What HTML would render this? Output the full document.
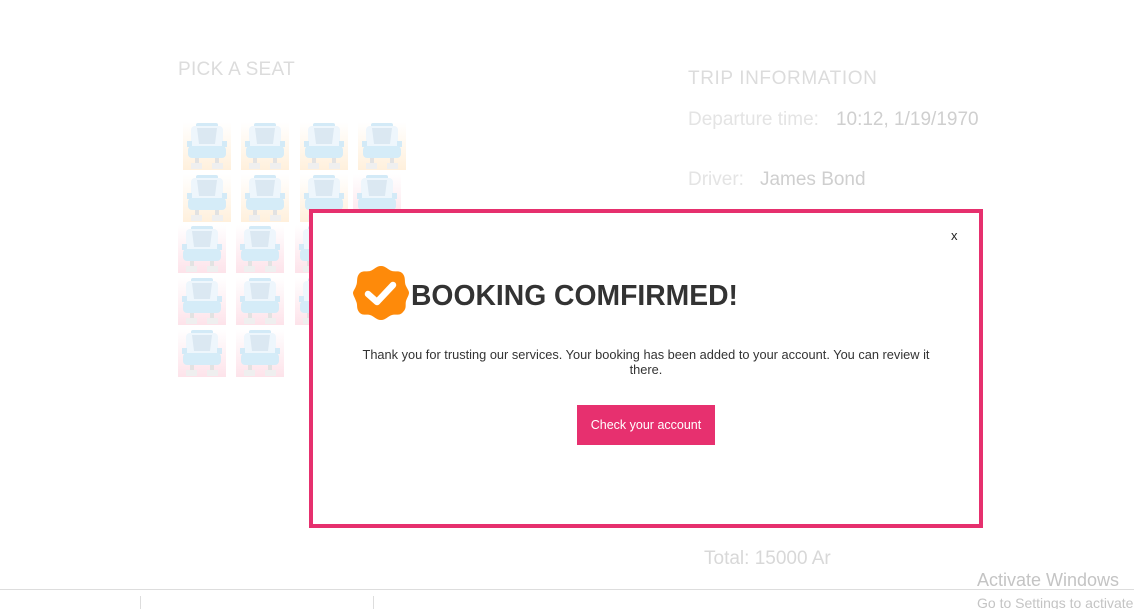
<!DOCTYPE html>
<html><head><meta charset="utf-8"><style>
html,body{margin:0;padding:0;width:1134px;height:609px;overflow:hidden;background:#fff;font-family:"Liberation Sans",sans-serif;position:relative}
.abs{position:absolute}
.faded{color:#dcdcdc}
.seat{position:absolute;width:48px;height:48px}
</style></head><body>
<svg width="0" height="0" style="position:absolute">
<defs>
<linearGradient id="og" x1="0" y1="0" x2="0" y2="1"><stop offset="0" stop-color="#fff"/><stop offset="1" stop-color="#fff0dc"/></linearGradient>
<linearGradient id="pg" x1="0" y1="0" x2="0" y2="1"><stop offset="0" stop-color="#fff"/><stop offset="1" stop-color="#fde3ea"/></linearGradient>
<g id="chair">
<rect x="13" y="1" width="22" height="6" rx="2" fill="#d3eaf7"/>
<rect x="8" y="4" width="32" height="30" rx="4" fill="#eef6fc"/>
<path d="M14 6 H34 L32 22 H16Z" fill="#dbe8f2"/>
<rect x="4" y="19" width="5" height="6" fill="#d3eaf7"/>
<rect x="39" y="19" width="5" height="6" fill="#d3eaf7"/>
<rect x="5" y="24" width="38" height="12" rx="4" fill="#d5ecf8"/>
<rect x="12" y="36" width="4" height="5" fill="#e2e2e2"/>
<rect x="32" y="36" width="4" height="5" fill="#e2e2e2"/>
<rect x="8" y="41" width="11" height="6" fill="#efefef"/>
<rect x="29" y="41" width="11" height="6" fill="#efefef"/>
</g>
</defs></svg>

<div class="abs faded" style="left:178px;top:59px;font-size:19px;letter-spacing:.3px">PICK A SEAT</div>

<svg class="seat" style="left:183px;top:122px"><rect width="48" height="48" fill="url(#og)"/><use href="#chair"/></svg>
<svg class="seat" style="left:241px;top:122px"><rect width="48" height="48" fill="url(#og)"/><use href="#chair"/></svg>
<svg class="seat" style="left:300px;top:122px"><rect width="48" height="48" fill="url(#og)"/><use href="#chair"/></svg>
<svg class="seat" style="left:358px;top:122px"><rect width="48" height="48" fill="url(#og)"/><use href="#chair"/></svg>
<svg class="seat" style="left:183px;top:174px"><rect width="48" height="48" fill="url(#og)"/><use href="#chair"/></svg>
<svg class="seat" style="left:241px;top:174px"><rect width="48" height="48" fill="url(#og)"/><use href="#chair"/></svg>
<svg class="seat" style="left:300px;top:174px"><rect width="48" height="48" fill="url(#og)"/><use href="#chair"/></svg>
<svg class="seat" style="left:353px;top:174px"><rect width="48" height="48" fill="url(#pg)"/><use href="#chair"/></svg>
<svg class="seat" style="left:178px;top:225px"><rect width="48" height="48" fill="url(#pg)"/><use href="#chair"/></svg>
<svg class="seat" style="left:236px;top:225px"><rect width="48" height="48" fill="url(#pg)"/><use href="#chair"/></svg>
<svg class="seat" style="left:295px;top:225px"><rect width="48" height="48" fill="url(#pg)"/><use href="#chair"/></svg>
<svg class="seat" style="left:178px;top:277px"><rect width="48" height="48" fill="url(#pg)"/><use href="#chair"/></svg>
<svg class="seat" style="left:236px;top:277px"><rect width="48" height="48" fill="url(#pg)"/><use href="#chair"/></svg>
<svg class="seat" style="left:295px;top:277px"><rect width="48" height="48" fill="url(#pg)"/><use href="#chair"/></svg>
<svg class="seat" style="left:178px;top:329px"><rect width="48" height="48" fill="url(#pg)"/><use href="#chair"/></svg>
<svg class="seat" style="left:236px;top:329px"><rect width="48" height="48" fill="url(#pg)"/><use href="#chair"/></svg>

<div class="abs faded" style="left:688px;top:68px;font-size:19px;letter-spacing:.6px">TRIP INFORMATION</div>
<div class="abs" style="left:688px;top:109px;font-size:19px"><span style="color:#e4e4e4">Departure time:</span><span style="color:#cfcfcf;margin-left:17px">10:12, 1/19/1970</span></div>
<div class="abs" style="left:688px;top:169px;font-size:19px"><span style="color:#e4e4e4">Driver:</span><span style="color:#cfcfcf;margin-left:16px">James Bond</span></div>
<div class="abs" style="left:704px;top:548px;font-size:19px;color:#d8d8d8">Total: 15000 Ar</div>

<div class="abs" style="left:0;top:589px;width:1134px;height:1px;background:#ddd"></div>
<div class="abs" style="left:140px;top:596px;width:1px;height:13px;background:#ddd"></div>
<div class="abs" style="left:373px;top:596px;width:1px;height:13px;background:#ddd"></div>
<div class="abs" style="left:977px;top:570px;width:157px;overflow:hidden;font-size:18px;color:#c4c4c4;white-space:nowrap">Activate Windows</div>
<div class="abs" style="left:977px;top:595px;width:157px;overflow:hidden;font-size:14px;color:#c4c4c4;white-space:nowrap">Go to Settings to activate Windows.</div>

<div class="abs" style="left:309px;top:209px;width:666px;height:311px;border:4px solid #e6306e;background:#fff"></div>
<div class="abs" style="left:951px;top:228px;font-size:13px;color:#222">x</div>

<svg class="abs" style="left:352px;top:264px" width="58" height="58" viewBox="0 0 58 58">
<path fill="#fe8a0a" d="M29 2 C34 2 36 6 40 7 C44 8 48 6 51 10 C54 14 52 18 54 22 C56 26 57 27 57 29 C57 31 55 34 54 37 C53 41 55 44 51 48 C48 52 44 50 40 51 C36 52 34 56 29 56 C24 56 22 52 18 51 C14 50 10 52 7 48 C4 44 6 41 4 37 C3 34 1 31 1 29 C1 27 3 25 4 22 C6 18 4 14 7 10 C10 6 14 8 18 7 C22 6 24 2 29 2Z"/>
<path d="M16 30 L25 38 L41 21" fill="none" stroke="#fff" stroke-width="6.5" stroke-linecap="round" stroke-linejoin="round"/>
</svg>
<div class="abs" style="left:411px;top:279px;font-size:28.3px;font-weight:bold;color:#333;white-space:nowrap">BOOKING COMFIRMED!</div>

<div class="abs" style="left:346px;top:347px;width:600px;text-align:center;font-size:12.8px;line-height:15px;color:#333;white-space:nowrap">Thank you for trusting our services. Your booking has been added to your account. You can review it<br>there.</div>

<div class="abs" style="left:577px;top:405px;width:138px;height:40px;background:#e7306f;color:#fff;font-size:12.5px;line-height:40px;text-align:center">Check your account</div>
</body></html>
